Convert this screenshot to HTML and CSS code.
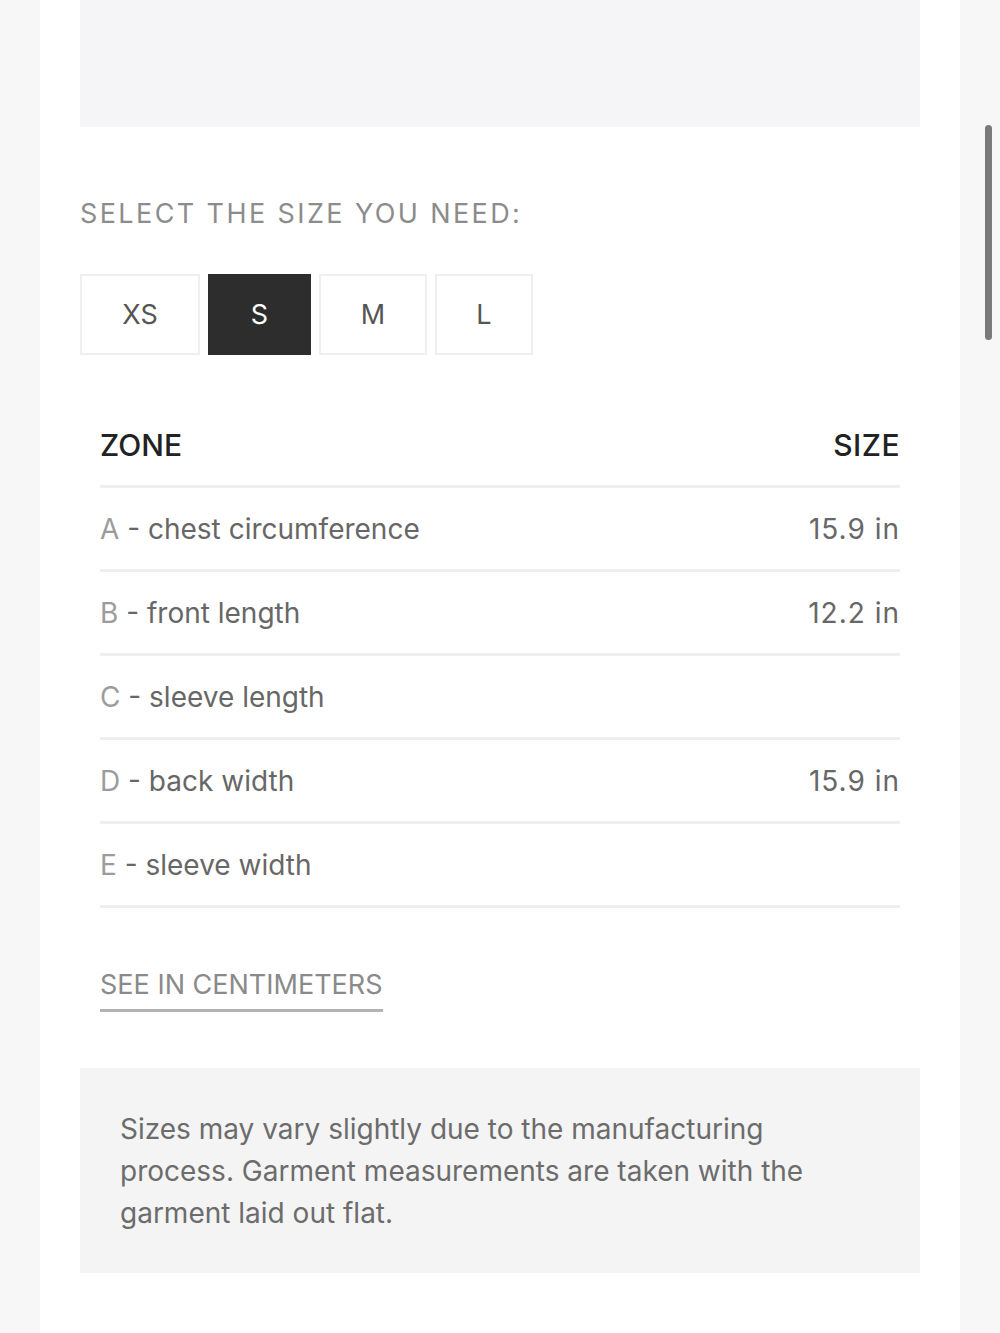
FILE: index.html
```html
<!DOCTYPE html>
<html lang="en">
<head>
<meta charset="utf-8">
<title>Size guide</title>
<link rel="stylesheet" href="styles.css">
</head>
<body>
<div class="panel">
  <div class="figure"></div>
  <h2 class="select-title">SELECT THE SIZE YOU NEED:</h2>
  <div class="sizes">
    <button class="size size-xs">XS</button>
    <button class="size size-s active">S</button>
    <button class="size size-m">M</button>
    <button class="size size-l">L</button>
  </div>
  <div class="table">
    <div class="row head"><span class="zone">ZONE</span><span class="val">SIZE</span></div>
    <div class="row"><span class="zone"><span class="letter">A</span> - chest circumference</span><span class="val">15.9 in</span></div>
    <div class="row"><span class="zone"><span class="letter">B</span> - front length</span><span class="val">12.2 in</span></div>
    <div class="row"><span class="zone"><span class="letter">C</span> - sleeve length</span><span class="val"></span></div>
    <div class="row"><span class="zone"><span class="letter">D</span> - back width</span><span class="val">15.9 in</span></div>
    <div class="row"><span class="zone"><span class="letter">E</span> - sleeve width</span><span class="val"></span></div>
  </div>
  <div class="link-wrap"><a class="link" href="#">SEE IN CENTIMETERS</a></div>
  <div class="note">
    <p>Sizes may vary slightly due to the manufacturing process. Garment measurements are taken with the garment laid out flat.</p>
  </div>
</div>
<div class="scrollbar"></div>
</body>
</html>
```
FILE: styles.css
```css
* { box-sizing: border-box; }
html, body { margin: 0; padding: 0; }
body {
  background: #f7f7f7;
  font-family: "Inter", "Liberation Sans", sans-serif;
  height: 1333px;
  overflow: hidden;
}
.panel {
  margin: 0 40px;
  background: #ffffff;
  min-height: 1333px;
  padding: 0 40px;
}
.figure {
  height: 127px;
  background: #f5f5f7;
}
.select-title {
  margin: 72px 0 0;
  font-size: 27px;
  line-height: 30px;
  font-weight: 400;
  letter-spacing: 2.4px;
  color: #8c8c8c;
}
.sizes {
  display: flex;
  gap: 8px;
  margin-top: 45px;
}
.size {
  height: 81px;
  padding: 0;
  border: 2px solid #efefef;
  background: #fff;
  color: #555;
  font-family: inherit;
  font-size: 27px;
  font-weight: 400;
}
.size-xs { width: 120px; }
.size-s { width: 103px; }
.size-m { width: 108px; }
.size-l { width: 98px; }
.size.active {
  background: #2d2d2d;
  border-color: #2d2d2d;
  color: #fff;
}
.table {
  margin: 53px 20px 0;
}
.row {
  display: flex;
  justify-content: space-between;
  padding: 24px 0 23px;
  line-height: 34px;
  font-size: 28px;
  color: #676767;
  border-bottom: 3px solid #efefef;
}
.row .val { letter-spacing: 1px; }
.row.head {
  padding: 20px 0 23px;
  color: #222;
  font-weight: 500;
  font-size: 30px;
}
.row.head .val { letter-spacing: 0.5px; }
.letter { color: #9c9c9c; }
.link-wrap {
  margin: 60px 20px 0;
}
.link {
  display: inline-block;
  font-size: 27px;
  line-height: 34px;
  color: #8a8a8a;
  text-decoration: none;
  padding-bottom: 7px;
  border-bottom: 3px solid #b3b3b3;
}
.note {
  margin-top: 56px;
  background: #f4f4f4;
  padding: 40px 40px 39px;
}
.note p {
  margin: 0;
  max-width: 720px;
  font-size: 28px;
  line-height: 42px;
  color: #6c6c6c;
}
.scrollbar {
  position: fixed;
  left: 985px;
  top: 125px;
  width: 7px;
  height: 215px;
  border-radius: 4px;
  background: #7a7a7a;
}
```
